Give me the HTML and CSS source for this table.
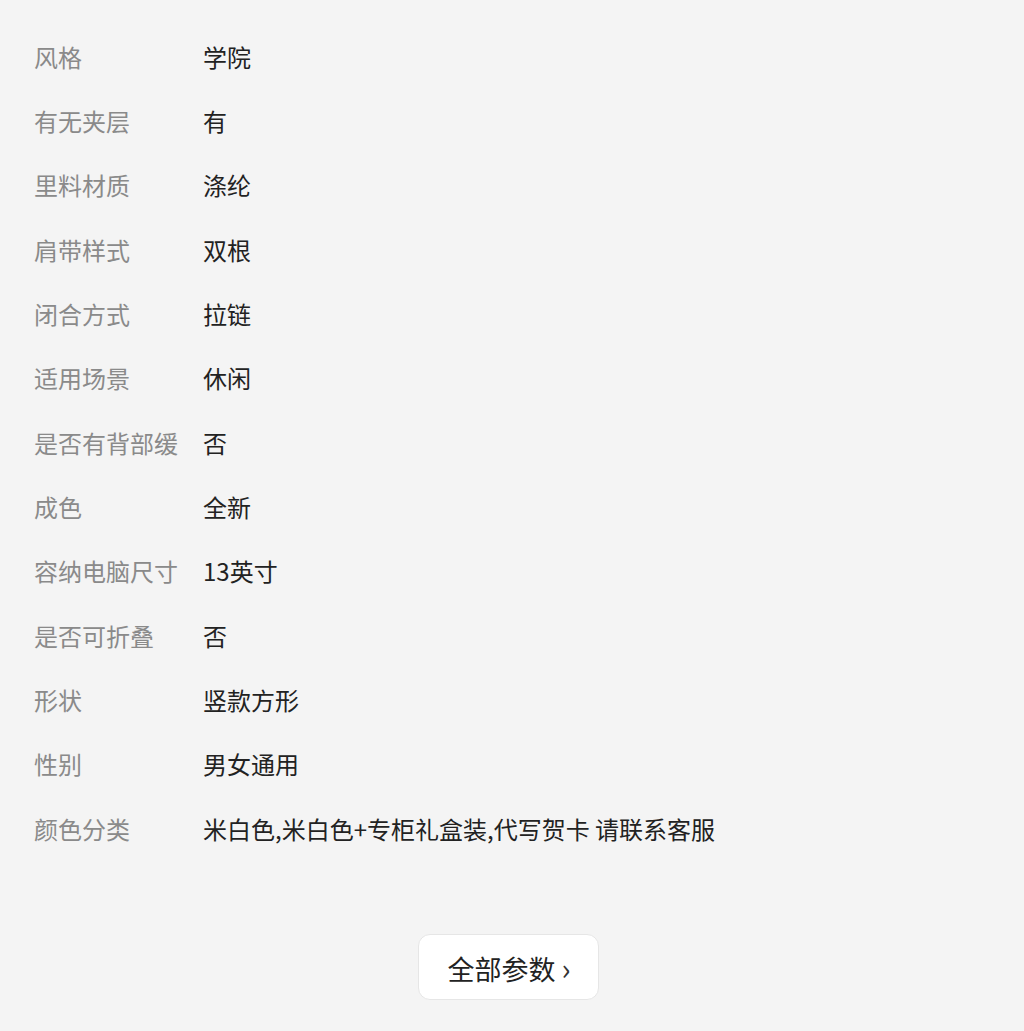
FILE: index.html
```html
<!DOCTYPE html>
<html lang="zh-CN">
<head>
    <meta charset="UTF-8">
    <meta name="viewport" content="width=device-width, initial-scale=1.0">
    <title>商品参数</title>
    <link rel="stylesheet" href="styles.css">
</head>
<body>
    <div class="params">
        <div class="param-row"><span class="param-label">风格</span><span class="param-value">学院</span></div>
        <div class="param-row"><span class="param-label">有无夹层</span><span class="param-value">有</span></div>
        <div class="param-row"><span class="param-label">里料材质</span><span class="param-value">涤纶</span></div>
        <div class="param-row"><span class="param-label">肩带样式</span><span class="param-value">双根</span></div>
        <div class="param-row"><span class="param-label">闭合方式</span><span class="param-value">拉链</span></div>
        <div class="param-row"><span class="param-label">适用场景</span><span class="param-value">休闲</span></div>
        <div class="param-row"><span class="param-label">是否有背部缓</span><span class="param-value">否</span></div>
        <div class="param-row"><span class="param-label">成色</span><span class="param-value">全新</span></div>
        <div class="param-row"><span class="param-label">容纳电脑尺寸</span><span class="param-value">13英寸</span></div>
        <div class="param-row"><span class="param-label">是否可折叠</span><span class="param-value">否</span></div>
        <div class="param-row"><span class="param-label">形状</span><span class="param-value">竖款方形</span></div>
        <div class="param-row"><span class="param-label">性别</span><span class="param-value">男女通用</span></div>
        <div class="param-row"><span class="param-label">颜色分类</span><span class="param-value">米白色,米白色+专柜礼盒装,代写贺卡 请联系客服</span></div>
    </div>

    <div class="more">
        <button class="more-btn">全部参数 <span class="more-arrow">›</span></button>
    </div>
</body>
</html>
```
FILE: styles.css
```css
body {
    margin: 0;
    padding: 0;
    background-color: #f4f4f4;
    font-family: "Noto Sans CJK SC", "Noto Sans", sans-serif;
}

.params {
    padding: 24px 0 0 34px;
}

.param-row {
    display: flex;
    align-items: center;
    height: 64.33px;
    font-size: 24px;
}

.param-label {
    width: 169px;
    flex-shrink: 0;
    color: #8a8a8a;
}

.param-value {
    color: #222;
}

.more {
    display: flex;
    justify-content: center;
    padding: 74px 8px 0 0;
}

.more-btn {
    width: 181px;
    height: 66px;
    background-color: #fff;
    border: 1px solid #e6e6e6;
    border-radius: 12px;
    font-family: "Noto Sans CJK SC", "Noto Sans", sans-serif;
    font-size: 27px;
    color: #222;
    padding: 0 0 0 2px;
}

.more-arrow {
    font-size: 30px;
    color: #333;
}
```
